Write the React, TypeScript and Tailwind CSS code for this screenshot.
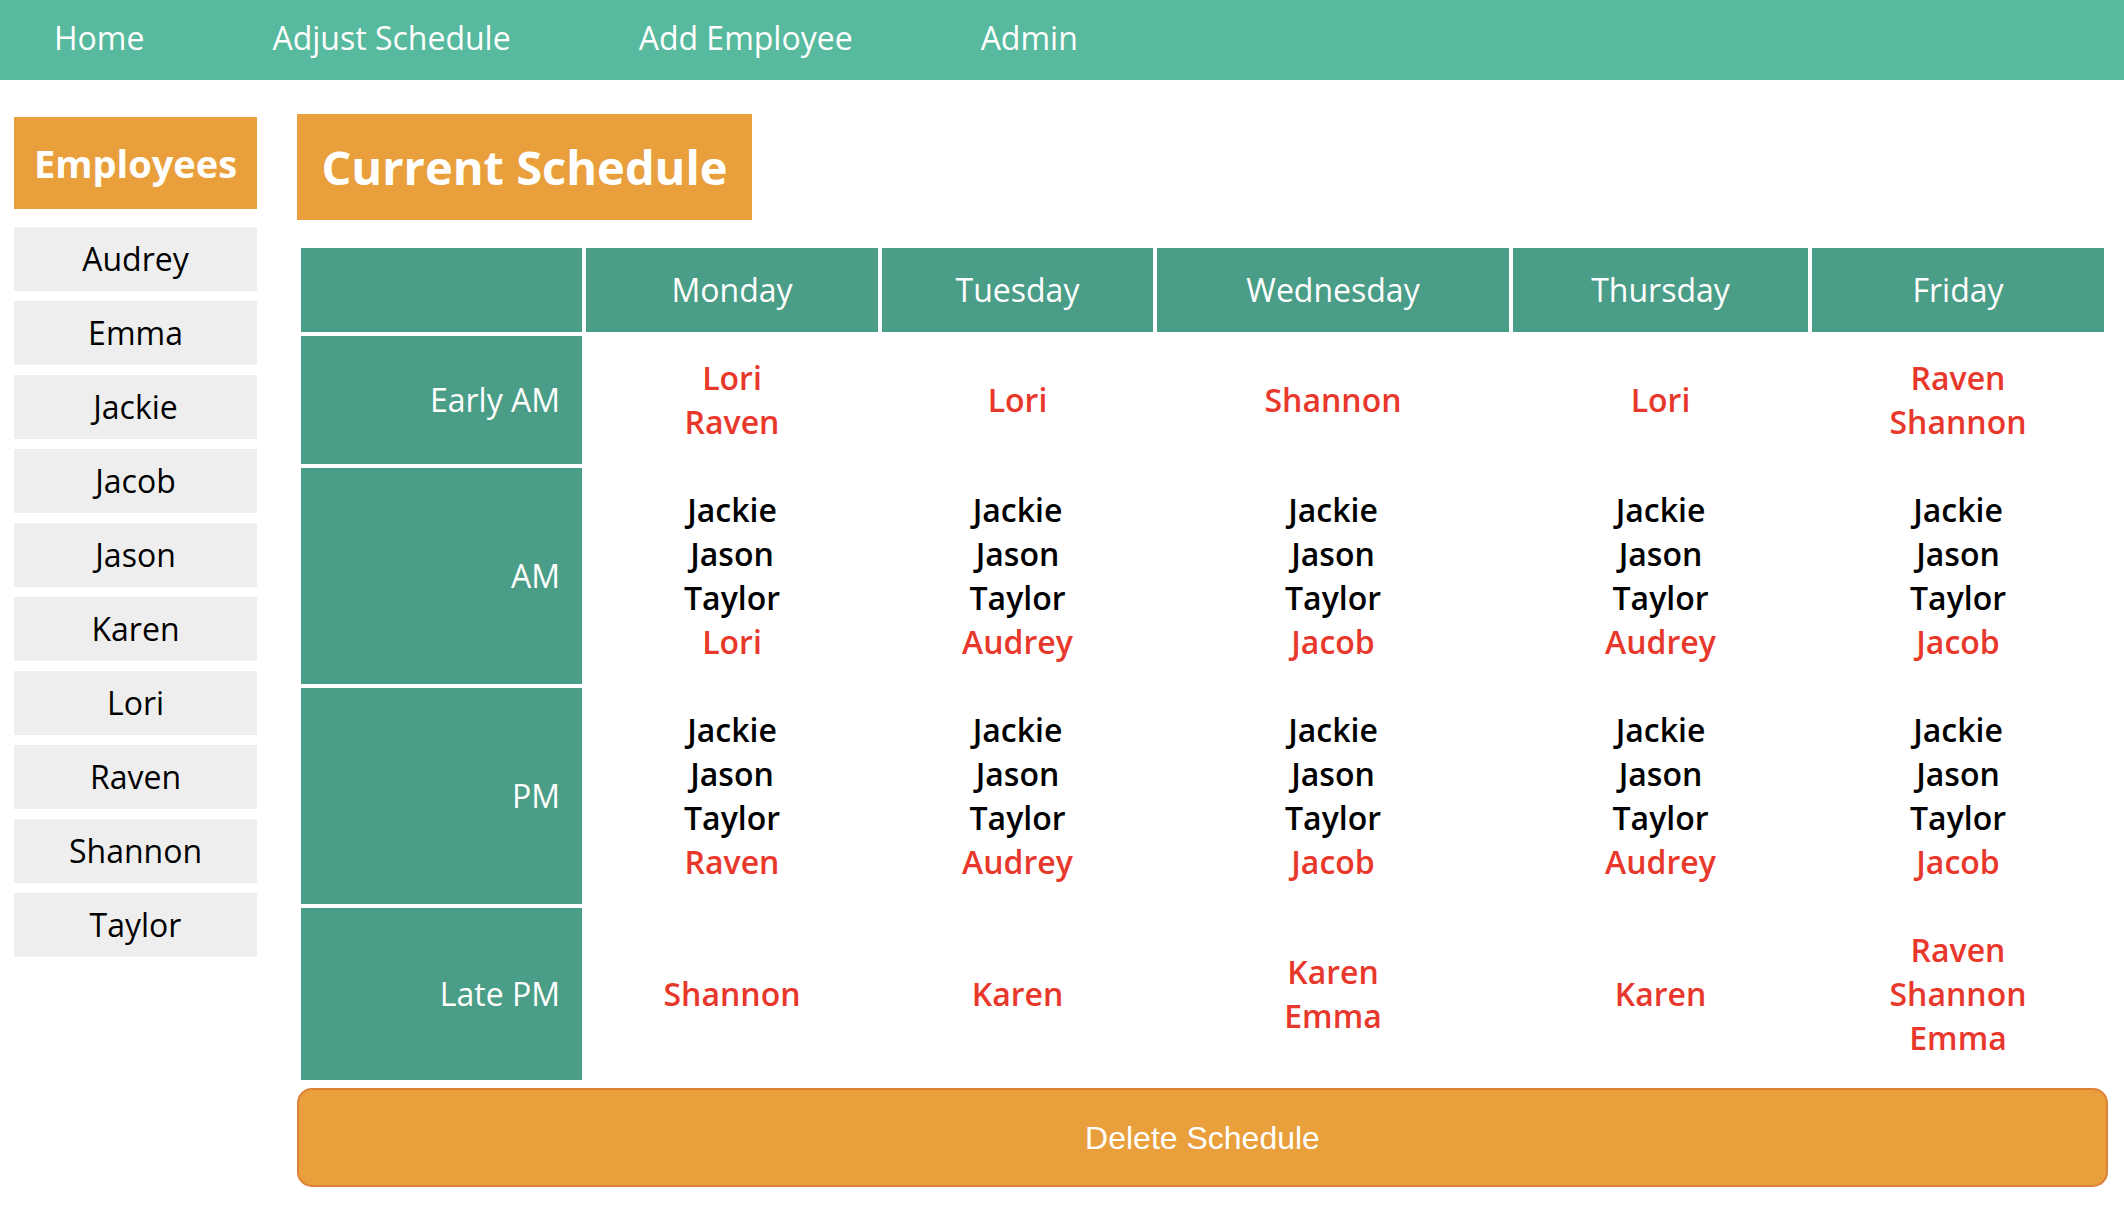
import React from "react";

type Name = { n: string; r?: boolean };

const days = ["Monday", "Tuesday", "Wednesday", "Thursday", "Friday"];

const core = (last: string): Name[] => [
  { n: "Jackie" },
  { n: "Jason" },
  { n: "Taylor" },
  { n: last, r: true },
];

const rows: { label: string; cells: Name[][] }[] = [
  {
    label: "Early AM",
    cells: [
      [{ n: "Lori", r: true }, { n: "Raven", r: true }],
      [{ n: "Lori", r: true }],
      [{ n: "Shannon", r: true }],
      [{ n: "Lori", r: true }],
      [{ n: "Raven", r: true }, { n: "Shannon", r: true }],
    ],
  },
  {
    label: "AM",
    cells: [core("Lori"), core("Audrey"), core("Jacob"), core("Audrey"), core("Jacob")],
  },
  {
    label: "PM",
    cells: [core("Raven"), core("Audrey"), core("Jacob"), core("Audrey"), core("Jacob")],
  },
  {
    label: "Late PM",
    cells: [
      [{ n: "Shannon", r: true }],
      [{ n: "Karen", r: true }],
      [{ n: "Karen", r: true }, { n: "Emma", r: true }],
      [{ n: "Karen", r: true }],
      [{ n: "Raven", r: true }, { n: "Shannon", r: true }, { n: "Emma", r: true }],
    ],
  },
];

const employees = ["Audrey", "Emma", "Jackie", "Jacob", "Jason", "Karen", "Lori", "Raven", "Shannon", "Taylor"];

export default function App() {
  return (
    <div className="bg-white font-['Open_Sans',sans-serif]">
      <nav className="flex h-[80px] items-center gap-[128px] bg-[#57b99d] pb-[4px] pl-[54px] text-[32px] text-white">
        <span>Home</span>
        <span>Adjust Schedule</span>
        <span>Add Employee</span>
        <span>Admin</span>
      </nav>
      <div className="flex pl-[14px] pt-[34px]">
        <aside className="mt-[3px] flex w-[243px] flex-col">
          <div className="mb-[18px] flex h-[92px] items-center justify-center bg-[#e9a03c] text-[38px] font-bold text-white">
            Employees
          </div>
          <div className="flex flex-col gap-[10px]">
            {employees.map((e) => (
              <div key={e} className="flex h-[64px] items-center justify-center bg-[#eeeeee] text-[32px] text-black">
                {e}
              </div>
            ))}
          </div>
        </aside>
        <main className="ml-[40px] w-[1811px]">
          <div className="flex h-[106px] w-[455px] items-center justify-center whitespace-nowrap bg-[#e9a03c] text-[47px] font-bold text-white">
            Current Schedule
          </div>
          <div className="mt-[24px] grid grid-cols-[281px_292px_271px_352px_295px_292px] gap-[4px] p-[4px]">
            <div className="bg-[#4a9d86]" />
            {days.map((d) => (
              <div key={d} className="bg-[#4a9d86] py-[20px] text-center text-[32px] leading-[44px] text-white">
                {d}
              </div>
            ))}
            {rows.map((row) => (
              <React.Fragment key={row.label}>
                <div className="flex items-center justify-end bg-[#4a9d86] pr-[22px] text-[32px] leading-[44px] text-white">
                  {row.label}
                </div>
                {row.cells.map((cell, i) => (
                  <div key={i} className="flex flex-col items-center justify-center py-[20px] text-[32px] font-semibold leading-[44px]">
                    {cell.map((nm, j) => (
                      <span key={j} className={nm.r ? "text-[#e8382c]" : "text-black"}>
                        {nm.n}
                      </span>
                    ))}
                  </div>
                ))}
              </React.Fragment>
            ))}
          </div>
          <button className="mt-[4px] flex h-[99px] w-full items-center justify-center rounded-[15px] border-2 border-[#dc8237] bg-[#e9a03c] font-['Liberation_Sans',Arial,sans-serif] text-[32px] text-white">
            Delete Schedule
          </button>
        </main>
      </div>
    </div>
  );
}
